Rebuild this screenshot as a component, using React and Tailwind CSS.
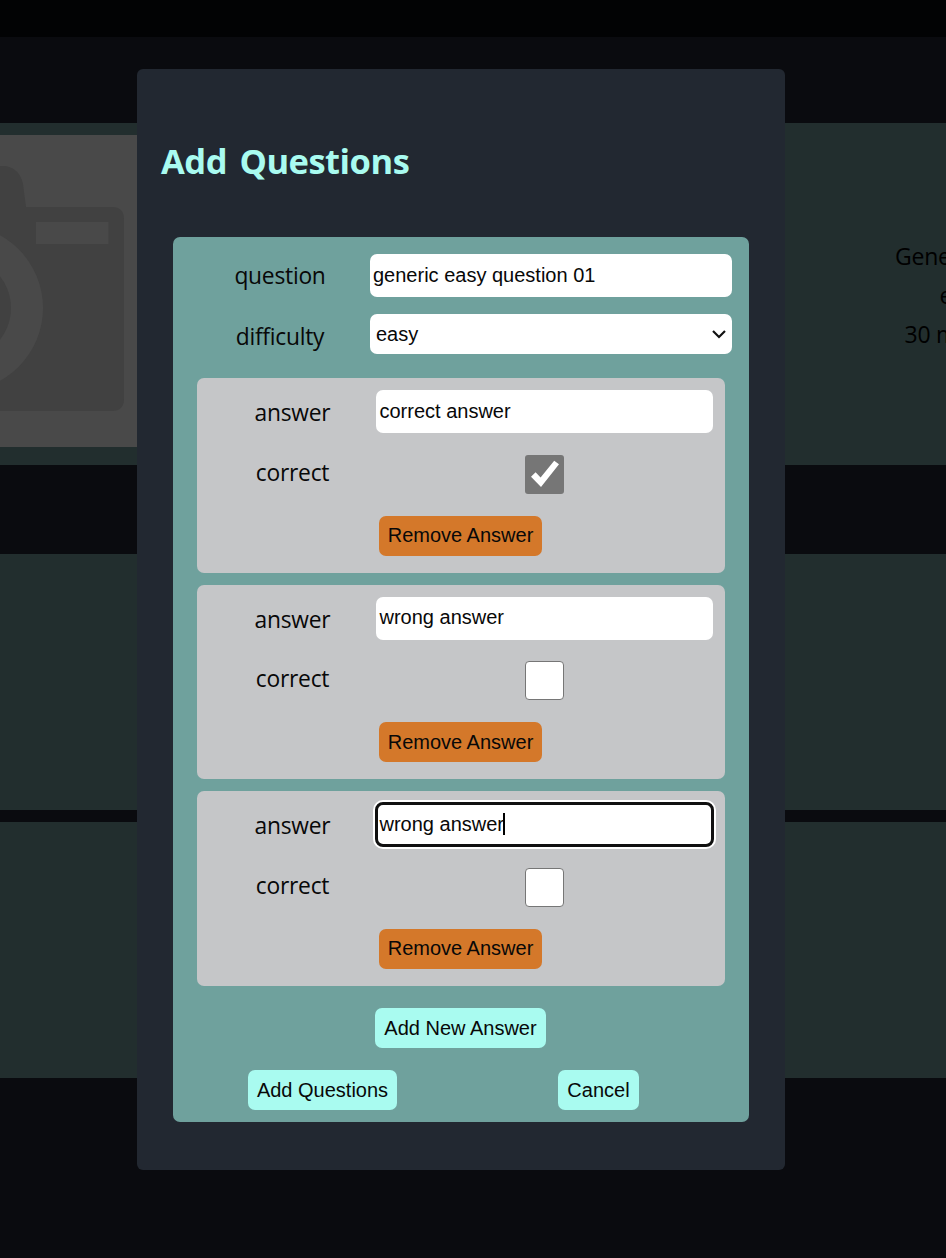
const answers = [
  { text: "correct answer", correct: true },
  { text: "wrong answer", correct: false },
  { text: "wrong answer", correct: false, focused: true },
];

function Label({ children, className = "" }) {
  return (
    <span className={`text-center font-['Open_Sans','Noto_Sans',sans-serif] text-[22.8px] leading-[31px] tracking-[-0.25px] ${className}`}>
      {children}
    </span>
  );
}

function Button({ children, className = "bg-[#a9fbf0]" }) {
  return (
    <button className={`h-10 rounded-[7px] pb-px text-center text-[20px] leading-none whitespace-nowrap ${className}`}>
      {children}
    </button>
  );
}

function Checkbox({ checked }) {
  if (!checked) {
    return <span className="size-[39px] rounded-[4px] border-[1.5px] border-[#767676] bg-white" />;
  }
  return (
    <span className="size-[39px] rounded-[3px] bg-[#767676]">
      <svg viewBox="0 0 39 39" className="size-full">
        <path d="M34 9.3L29.2 5.7L15.6 22.4L10.6 17.3L6 21.8L16 32Z" fill="#fff" />
      </svg>
    </span>
  );
}

function AnswerCard({ text, correct, focused }) {
  return (
    <section className="flex h-[194.5px] flex-col rounded-[7px] bg-[#c5c6c8] px-3 pt-3">
      <div className="flex h-[43px]">
        <Label className="w-[167px] pt-[7px]">answer</Label>
        <div
          className={`flex w-[337px] items-center rounded-[7px] bg-white pb-[1.5px] pl-[3.5px] text-[20px] ${
            focused ? "outline-[3px] outline-[#101010] -outline-offset-2 ring-[3px] ring-white" : ""
          }`}
        >
          <span>{text}</span>
          {focused && <span className="-ml-px h-[22px] w-[2px] bg-black" />}
        </div>
      </div>
      <div className="mt-[21.5px] flex h-[39px]">
        <Label className="w-[167px] pt-[2.4px]">correct</Label>
        <div className="flex w-[337px] justify-center">
          <Checkbox checked={correct} />
        </div>
      </div>
      <div className="mt-[22px] flex justify-center pr-px">
        <Button className="w-[163px] bg-[#d4782a]">Remove Answer</Button>
      </div>
    </section>
  );
}

function Backdrop() {
  return (
    <div className="flex h-full flex-col">
      <div className="h-[37px] bg-[#020304]" />
      <div className="mt-[86px] flex h-[342px] justify-between bg-[#222e2e]">
        <svg viewBox="0 0 137 312" className="mt-3 h-[312px] w-[137px] bg-[#494949]">
          <path d="M0 31H6Q20 34 23 49L26 72H112Q124 72 124 84V264Q124 276 112 276H0Z" fill="#414141" />
          <rect x="36" y="87" width="72.5" height="22" fill="#494949" />
          <circle cx="-40" cy="173" r="83" fill="#494949" />
          <circle cx="-40" cy="173" r="51" fill="#414141" />
        </svg>
        <div className="flex w-[51px] flex-col overflow-hidden pt-[114px] font-['Open_Sans','Noto_Sans',sans-serif] text-[23px] leading-[39px] tracking-[-0.25px] whitespace-nowrap text-black">
          <span>Generic</span>
          <span className="pl-[44.5px]">easy</span>
          <span className="pl-[9.5px]">30 min</span>
        </div>
      </div>
      <div className="mt-[89px] h-64 bg-[#222e2e]" />
      <div className="mt-3 h-64 bg-[#222e2e]" />
    </div>
  );
}

export default function App() {
  return (
    <main className="relative h-[1258px] w-[946px] overflow-hidden bg-[#0a0b0f] font-['Liberation_Sans',Arial,sans-serif] text-[#080808]">
      <Backdrop />
      <div role="dialog" className="absolute top-[69px] left-[137px] flex h-[1101px] w-[648px] flex-col rounded-[6px] bg-[#222831] px-9">
        <h1 className="-ml-3 h-[168px] pt-[68px] font-['Open_Sans','Noto_Sans',sans-serif] text-[34.5px] leading-[48px] font-bold tracking-[-0.5px] text-[#a9fbf0] [word-spacing:4px]">
          Add Questions
        </h1>
        <form className="flex h-[885px] flex-col rounded-[7px] bg-[#6fa19d] pt-[17px]">
          <div className="flex h-[43px] pl-[17px]">
            <Label className="w-[180px] pt-[6px]">question</Label>
            <div className="flex w-[362px] items-center rounded-[7px] bg-white pb-[2px] pl-[3px] text-[20px]">generic easy question 01</div>
          </div>
          <div className="mt-[17px] flex h-10 pl-[17px]">
            <Label className="w-[180px] pt-[7px]">difficulty</Label>
            <div className="flex w-[362px] items-center justify-between rounded-[7px] bg-white pr-[5px] pl-[6px] text-[20px]">
              <span>easy</span>
              <svg viewBox="0 0 16 10" className="h-[10px] w-4">
                <path d="M2 2L8 8L14 2" fill="none" stroke="#111" strokeWidth="2.2" />
              </svg>
            </div>
          </div>
          <div className="mt-6 flex flex-col gap-3 px-6">
            {answers.map((answer, index) => (
              <AnswerCard key={index} {...answer} />
            ))}
          </div>
          <div className="mt-[22.5px] flex justify-center pr-px">
            <Button className="w-[171px] bg-[#a9fbf0]">Add New Answer</Button>
          </div>
          <div className="mt-[22px] flex justify-between pr-[110px] pl-[75px]">
            <Button className="w-[149px] bg-[#a9fbf0]">Add Questions</Button>
            <Button className="w-[81px] bg-[#a9fbf0]">Cancel</Button>
          </div>
        </form>
      </div>
    </main>
  );
}
